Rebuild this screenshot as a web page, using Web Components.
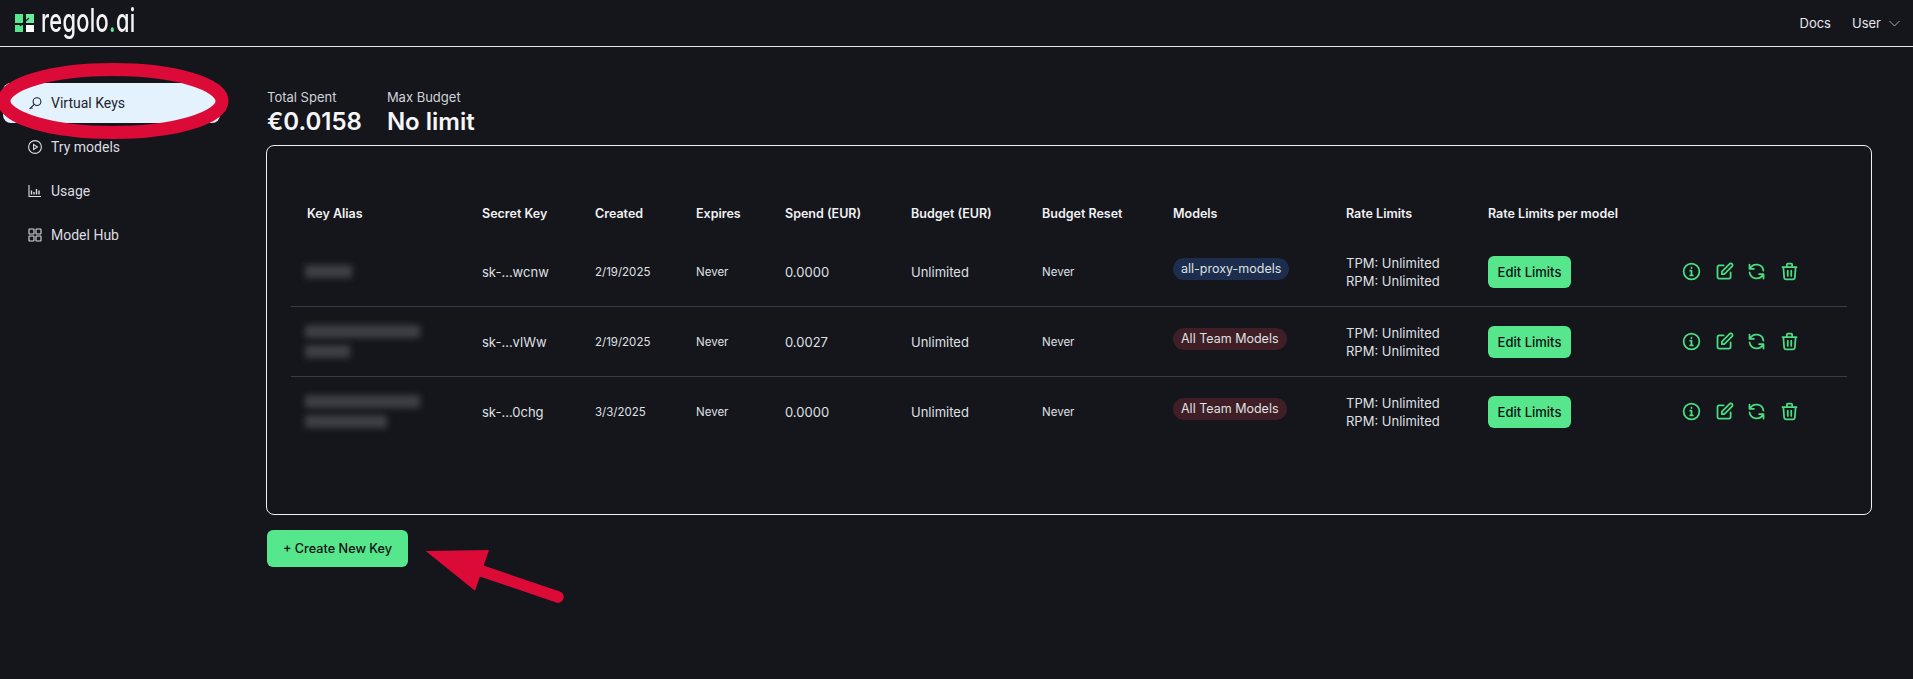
<!DOCTYPE html>
<html lang="en"><head><meta charset="utf-8"><title>regolo.ai</title>
<style>
html,body{margin:0;height:679px;overflow:hidden;background:#15151c;color:#e5e7eb;font-family:Inter,"Liberation Sans",sans-serif}
.layout{display:flex;align-items:flex-start}
</style></head><body>
<app-header></app-header>
<div class="layout">
  <side-nav>
    <nav-item active label="Virtual Keys" icon="key"></nav-item>
    <nav-item label="Try models" icon="play"></nav-item>
    <nav-item label="Usage" icon="bars"></nav-item>
    <nav-item label="Model Hub" icon="grid"></nav-item>
  </side-nav>
  <keys-page>
    <stat-row>
      <stat-block label="Total Spent" value="€0.0158"></stat-block>
      <stat-block label="Max Budget" value="No limit"></stat-block>
    </stat-row>
    <table-card>
      <key-head></key-head>
      <key-row secret="sk-...wcnw" created="2/19/2025" spend="0.0000" model="all-proxy-models" tone="blue" blur="47"></key-row>
      <key-row secret="sk-...vlWw" created="2/19/2025" spend="0.0027" model="All Team Models" tone="red" blur="115,45"></key-row>
      <key-row secret="sk-...0chg" created="3/3/2025" spend="0.0000" model="All Team Models" tone="red" blur="115,82" last></key-row>
    </table-card>
    <green-button big>+ Create New Key</green-button>
  </keys-page>
</div>
<red-annotations></red-annotations>
<script>
const COLS='175px 113px 101px 89px 126px 131px 131px 173px 142px 193px 182px';
function def(name,css,html,init){
  customElements.define(name,class extends HTMLElement{
    connectedCallback(){
      if(this.shadowRoot)return;
      const r=this.attachShadow({mode:'open'});
      r.innerHTML='<style>'+css+'</style>'+(typeof html==='function'?html(this):html);
      if(init)init(this,r);
    }
  });
}
def('app-header',`
:host{display:flex;align-items:center;justify-content:space-between;height:46px;border-bottom:1px solid #e8e8ea;box-sizing:content-box;padding:0 13px 0 15px}
.logo{display:flex;align-items:flex-start;height:46px;position:relative}
svg.mark{width:19px;height:19px;margin-top:13px}
.word{font:500 33px/46px Inter,"Liberation Sans",sans-serif;font-feature-settings:"cv11";color:#f3f4f6;display:inline-block;transform-origin:0 0;transform:scaleX(.66);margin:-3px 0 0 7px;width:101px;white-space:nowrap;letter-spacing:.5px}
.word b{color:#56e78d;font-weight:500}
.right{display:flex;align-items:center;font-size:13px;color:#e5e7eb}
.docs{margin-right:21px}
svg.chev{width:11px;height:7px;margin-left:8px;stroke:#a9abb0;fill:none;stroke-width:1}
`,`<div class="logo"><svg class="mark" viewBox="0 0 19 19"><rect x="0" y="1" width="8" height="9" fill="#56e78d"/><rect x="11" y="1" width="8" height="9" fill="#6bec9b"/><rect x="0" y="12" width="8" height="7" fill="#56e78d"/><rect x="11" y="12" width="8" height="7" fill="#fff"/><path d="M5 13 14 5" stroke="#15151c" stroke-width="1.2"/></svg><span class="word">regolo<b>.</b>ai</span></div>
<div class="right"><span class="docs">Docs</span><span>User</span><svg class="chev" viewBox="0 0 11 7"><path d="M.5 1 5.5 6 10.5 1"/></svg></div>`);

def('side-nav',`:host{display:block;width:225px;flex:none;padding-top:36px;box-sizing:border-box}`,`<slot></slot>`);
const NAV={
 key:'<circle cx="9" cy="5.6" r="3.9"/><path d="M6.2 8.4 1.6 13"/><path d="M3.2 11.4 4.4 12.6"/>',
 play:'<circle cx="7" cy="7" r="6.4"/><path d="M5.6 4.5v5l3.8-2.5z"/>',
 bars:'<path d="M1 1v11.5h12"/><path d="M3.5 6.5v4M6 8v2.5M8.5 5v5.5M11 6.5v4" stroke-width="1.4"/>',
 grid:'<rect x="1" y="1" width="5" height="5" rx=".6"/><rect x="8" y="1" width="5" height="5" rx=".6"/><rect x="1" y="8" width="5" height="5" rx=".6"/><rect x="8" y="8" width="5" height="5" rx=".6"/>'
};
def('nav-item',`
:host{display:flex;align-items:center;height:40px;margin:0 5px 4px 3px;padding-left:25px;border-radius:8px;font:400 14px Roboto,sans-serif;color:#dcdde0}
:host([active]){background:#e3f2fd;color:#20242c}
svg{width:14px;height:14px;flex:none;margin-right:9px;fill:none;stroke:currentColor;stroke-width:1.1}
`,h=>`<svg viewBox="0 0 14 14">${NAV[h.getAttribute('icon')]}</svg><span>${h.getAttribute('label')}</span>`);

def('keys-page',`:host{display:block;flex:1;padding:42px 41px 0}`,`<slot></slot>`);
def('stat-row',`:host{display:flex;gap:25px;margin-left:1px;height:49px}`,`<slot></slot>`);
def('stat-block',`
:host{display:block}
.l{font-size:13px;line-height:16px;color:#d1d3d6}
.v{font-size:24px;line-height:32px;font-weight:600;color:#f6f6f7;margin-top:1px}
`,h=>`<div class="l">${h.getAttribute('label')}</div><div class="v">${h.getAttribute('value')}</div>`);
def('table-card',`
:host{display:block;margin-top:7px;height:370px;box-sizing:border-box;border:1px solid #f0f0f2;border-radius:8px;padding:45px 24px 0}
`,`<slot></slot>`);
def('key-head',`
:host{display:grid;grid-template-columns:${COLS};height:46px;align-items:center;font-size:12.5px;font-weight:600;color:#f0f1f2}
span{padding-left:16px;white-space:nowrap;margin-top:-2px}
`,['Key Alias','Secret Key','Created','Expires','Spend (EUR)','Budget (EUR)','Budget Reset','Models','Rate Limits','Rate Limits per model',''].map(t=>`<span>${t}</span>`).join(''));
const ACT=`<svg viewBox="0 0 24 24"><circle cx="12" cy="12" r="9"/><path d="M12 11v5.5M12 7.6v.4M10.5 11H12M10.5 16.5h3" /></svg>
<svg viewBox="0 0 24 24"><path d="M11 5H6a2 2 0 0 0-2 2v11a2 2 0 0 0 2 2h11a2 2 0 0 0 2-2v-5"/><path d="M17.6 3.6a2 2 0 1 1 2.8 2.8L11.8 15H9v-2.8z"/></svg>
<svg viewBox="0 0 24 24"><path d="M4 4v5h.6M4.6 9A8 8 0 0 1 19.9 11M4.6 9H9"/><path d="M20 20v-5h-.6M19.4 15A8 8 0 0 1 4.1 13M19.4 15H15"/></svg>
<svg viewBox="0 0 24 24"><path d="M19 7l-.9 12.1A2 2 0 0 1 16.1 21H7.9a2 2 0 0 1-2-1.9L5 7M10 11v6M14 11v6M15 7V4a1 1 0 0 0-1-1h-4a1 1 0 0 0-1 1v3M4 7h16"/></svg>`;
def('key-row',`
:host{display:grid;grid-template-columns:${COLS};height:69px;align-items:center;font-size:13px;color:#dfe0e3;border-bottom:1px solid #373c4a}
:host([last]){border-bottom:0}
.c{padding-left:16px;white-space:nowrap}
.s{font-size:11.5px}
.blur{display:flex;flex-direction:column;gap:7px;padding-left:14px}
.blur i{display:block;height:13px;background:#3f3f45;filter:blur(3px)}
.rate{line-height:18px}
.pill{display:inline-block;height:22px;line-height:22px;padding:0 8px;border-radius:11px;font-size:12.5px;margin-top:-5px;vertical-align:middle}
.blue{background:#1c2d4d}.red{background:#3f1f25}
.acts{display:flex;gap:11.5px;padding-left:16px}
svg{width:21px;height:21px;fill:none;stroke:#4ade80;stroke-width:2;stroke-linecap:round;stroke-linejoin:round}
`,h=>{const g=n=>h.getAttribute(n);
return `<div class="blur">${g('blur').split(',').map(w=>`<i style="width:${w}px"></i>`).join('')}</div>
<div class="c">${g('secret')}</div><div class="c s">${g('created')}</div><div class="c s">Never</div><div class="c">${g('spend')}</div><div class="c">Unlimited</div><div class="c s">Never</div>
<div class="c"><span class="pill ${g('tone')}">${g('model')}</span></div>
<div class="c rate">TPM: Unlimited<br>RPM: Unlimited</div>
<div class="c"><green-button>Edit Limits</green-button></div>
<div class="acts">${ACT}</div>`});
def('green-button',`
:host{display:inline-flex;align-items:center;justify-content:center;width:83px;height:32px;border-radius:6px;background:#56e78d;color:#0b0f14;font-size:13px;font-weight:500;box-sizing:border-box;vertical-align:middle}
:host([big]){display:flex;width:141px;height:37px;margin:15px 0 0 1px;font-size:12.7px}
`,`<slot></slot>`);
def('red-annotations',`
:host{position:absolute;left:0;top:0;width:1913px;height:679px;pointer-events:none}
svg{position:absolute;left:0;top:0}
`,`<svg width="1913" height="679" viewBox="0 0 1913 679" fill="none"><ellipse cx="113" cy="101" rx="109" ry="31.5" stroke="#dc0a36" stroke-width="13"/>
<path d="M481.5 571 558 597" stroke="#dc0a36" stroke-width="11.5" stroke-linecap="round"/><path d="M425.7 551 489 550 475 590.7z" fill="#dc0a36"/></svg>`);
</script>
</body></html>
